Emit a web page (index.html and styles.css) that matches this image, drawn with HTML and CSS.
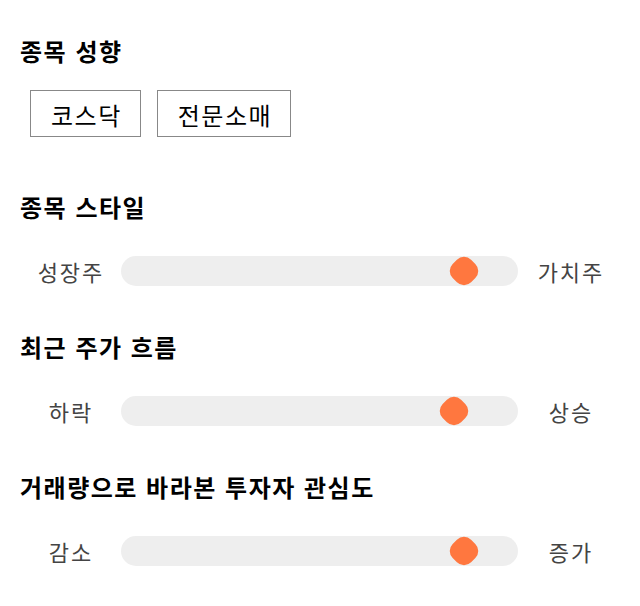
FILE: index.html
```html
<!DOCTYPE html>
<html lang="ko">
<head>
    <meta charset="UTF-8">
    <meta name="viewport" content="width=device-width, initial-scale=1.0">
    <title>종목 분석</title>
    <link rel="stylesheet" href="styles.css">
</head>
<body>
    <section class="block">
        <h2 class="title">종목 성향</h2>
        <div class="tags">
            <span class="tag">코스닥</span>
            <span class="tag">전문소매</span>
        </div>
    </section>

    <section class="block">
        <h2 class="title">종목 스타일</h2>
        <div class="scale">
            <span class="scale-label">성장주</span>
            <div class="track"><span class="thumb" style="left: 86.5%"></span></div>
            <span class="scale-label">가치주</span>
        </div>
    </section>

    <section class="block">
        <h2 class="title">최근 주가 흐름</h2>
        <div class="scale">
            <span class="scale-label">하락</span>
            <div class="track"><span class="thumb" style="left: 83.8%"></span></div>
            <span class="scale-label">상승</span>
        </div>
    </section>

    <section class="block">
        <h2 class="title">거래량으로 바라본 투자자 관심도</h2>
        <div class="scale">
            <span class="scale-label">감소</span>
            <div class="track"><span class="thumb" style="left: 86.5%"></span></div>
            <span class="scale-label">증가</span>
        </div>
    </section>
</body>
</html>
```

FILE: styles.css
```css
body {
    font-family: "Noto Sans CJK KR", "Noto Sans", sans-serif;
    margin: 0;
    padding: 36px 20px 0;
    background-color: #fff;
    color: #000;
}

.block {
    margin-bottom: 46px;
}

.title {
    margin: 0;
    font-size: 24px;
    font-weight: bold;
    line-height: 30px;
    letter-spacing: 1.5px;
}

.tags {
    display: flex;
    gap: 16px;
    margin: 24px 0 0 10px;
    padding-bottom: 9px;
}

.tag {
    border: 1px solid #888;
    padding: 2px 18px 0 20px;
    font-size: 24px;
    line-height: 43px;
    letter-spacing: 1.5px;
}

.scale {
    display: grid;
    grid-template-columns: 100px 1fr 100px;
    align-items: center;
    margin-top: 34px;
}

.scale-label {
    text-align: center;
    font-size: 22px;
    line-height: 30px;
    letter-spacing: 2px;
    text-indent: 2px;
    color: #444;
}

.track {
    position: relative;
    height: 30px;
    background-color: #eee;
    border-radius: 15px;
    margin: 0 2px 0 1px;
}

/* rounded diamond handle */
.thumb {
    position: absolute;
    top: 2px;
    width: 26px;
    height: 26px;
    margin-left: -13px;
    background-color: #ff773f;
    border-radius: 10px;
    transform: rotate(45deg);
}
```
